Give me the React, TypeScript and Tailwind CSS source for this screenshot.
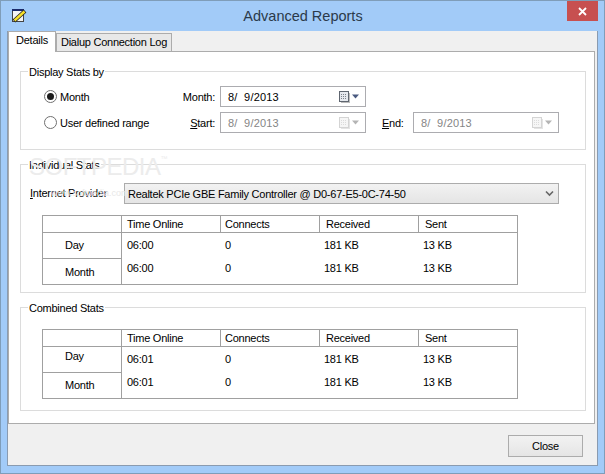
import type { ReactNode } from "react";

// Calendar glyph of the date picker, greyed when the control is disabled.
function DateIcon({ disabled }: { disabled?: boolean }) {
  const edge = disabled ? "#d4d4d4" : "#5f6670";
  const cell = disabled ? "#dcdcdc" : "#7d838c";
  const arrow = disabled ? "#b4b4b4" : "#4a5a80";
  return (
    <svg width="22" height="14" viewBox="0 0 22 14" className="shrink-0">
      <rect x="1.5" y="1.5" width="9" height="10" fill={disabled ? "#f6f6f6" : "#e6e9ee"} stroke={edge} />
      <path d="M3 12.5h9M11.5 3v9" stroke={disabled ? "#e4e4e4" : "#bcbcbc"} />
      {[4, 6, 8].map((y) =>
        [3, 5, 7].map((x) => <rect key={`${x}-${y}`} x={x} y={y} width="1" height="1" fill={cell} />),
      )}
      <path d="M14 4.5h7l-3.5 4z" fill={arrow} />
    </svg>
  );
}

function DateField({ disabled }: { disabled?: boolean }) {
  return (
    <div
      className={`flex h-[21px] w-[146px] items-center justify-between border border-[#acacb0] bg-white pl-[7px] pr-[5px] ${
        disabled ? "text-[#858585]" : "text-black"
      }`}
    >
      <span className="whitespace-pre pt-px tracking-[0.2px]">8/  9/2013</span>
      <DateIcon disabled={disabled} />
    </div>
  );
}

function Radio({ checked, label }: { checked?: boolean; label: string }) {
  return (
    <div className="flex w-[138px] items-center gap-[3px]">
      <span className="flex h-[13px] w-[13px] items-center justify-center rounded-full border border-[#707070] bg-white">
        {checked && <span className="h-[7px] w-[7px] rounded-full bg-[#1c1c1c]" />}
      </span>
      <span className="pt-px">{label}</span>
    </div>
  );
}

function Group({ title, className, children }: { title: string; className: string; children: ReactNode }) {
  return (
    <div className={`border border-[#dcdcdc] ${className}`}>
      <div className="-mt-[7px] ml-[7px] w-fit bg-white px-px leading-[15px]">{title}</div>
      {children}
    </div>
  );
}

type Row = { time: string };

function StatsTable({ rows, dayClass, monthClass }: { rows: Row[]; dayClass: string; monthClass: string }) {
  return (
    <div className="ml-[21px] w-[476px] border border-[#a0a0a0]">
      <div className="flex h-[17px] items-center border-b border-[#a0a0a0]">
        <div className="h-full w-[79px] border-r border-[#a0a0a0]" />
        <div className="flex h-full w-[99px] items-center border-r border-[#a0a0a0] pl-[5px] pt-px">Time Online</div>
        <div className="flex h-full w-[99px] items-center border-r border-[#a0a0a0] pl-[4px] pt-px">Connects</div>
        <div className="flex h-full w-[99px] items-center border-r border-[#a0a0a0] pl-[6px] pt-px">Received</div>
        <div className="flex h-full flex-1 items-center pl-[6px] pt-px">Sent</div>
      </div>
      <div className="flex h-[51px]">
        <div className="flex w-[79px] flex-col border-r border-[#a0a0a0] pl-[22px]">
          <div className={`-ml-[22px] flex h-[26px] items-center border-b border-[#a0a0a0] pl-[22px] ${dayClass}`}>Day</div>
          <div className={`flex flex-1 items-center ${monthClass}`}>Month</div>
        </div>
        <div className="flex flex-1 flex-col gap-[7px] pt-[4px]">
          {rows.map((r, i) => (
            <div key={i} className="flex h-[16px] items-center">
              <div className="w-[99px] pl-[5px]">{r.time}</div>
              <div className="w-[99px] pl-[4px]">0</div>
              <div className="w-[99px] pl-[4px]">181 KB</div>
              <div className="pl-[4px]">13 KB</div>
            </div>
          ))}
        </div>
      </div>
    </div>
  );
}

export default function App() {
  return (
    <div className="relative flex h-[474px] w-[605px] flex-col overflow-hidden border border-[#7f9db9] bg-[#a2cbf8] font-['Liberation_Sans',sans-serif] text-[11px] leading-[15px] tracking-[-0.25px] text-black">
      <div className="flex h-[30px] shrink-0 items-start">
        <svg width="16" height="16" viewBox="0 0 16 16" className="ml-[10px] mt-[7px] shrink-0">
          <rect x="1.5" y="2.5" width="11" height="11" fill="#f4f4f4" stroke="#444" />
          <rect x="1" y="1" width="12" height="2" fill="#1b2a6b" />
          <path d="M3 13 L14 3" stroke="#222" strokeWidth="4" />
          <path d="M3.5 12.5 L13.5 3.5" stroke="#f7e02a" strokeWidth="2.4" />
        </svg>
        <div className="flex-1 pl-[12px] pt-[6px] text-center text-[14.5px] leading-[18px] tracking-normal text-[#2b3a4a]">Advanced Reports</div>
        <div className="mr-[6px] flex h-[20px] w-[31px] items-center justify-center bg-[#c75050]">
          <svg width="9" height="9" viewBox="0 0 9 9">
            <path d="M1 1l7 7M8 1l-7 7" stroke="#fff" strokeWidth="1.8" />
          </svg>
        </div>
      </div>

      <div className="mb-[7px] ml-[6px] mr-[6px] flex flex-1 flex-col border-x border-b border-[#8a9bb0] bg-[#f0f0f0]">
        <div className="flex h-[20px] shrink-0 items-end pl-0">
          <div className="z-10 -mb-px flex h-[21px] w-[48px] items-center justify-center border-x border-t border-[#acacac] bg-white pb-[3px]">
            Details
          </div>
          <div className="flex h-[18px] w-[116px] items-center justify-center whitespace-nowrap border border-b-0 border-[#acacac] bg-[#e8e8e8]">
            Dialup Connection Log
          </div>
        </div>

        <div className="mr-[2px] flex h-[373px] shrink-0 flex-col border border-[#acacac] bg-white pl-[11px] pr-[8px] pt-[19px]">
          <Group title="Display Stats by" className="h-[79px]">
            <div className="flex flex-col gap-[5px] pt-[6px]">
              <div className="flex h-[21px] items-center pl-[23px]">
                <Radio checked label="Month" />
                <span className="w-[33px] pt-px text-right">Month:</span>
                <span className="w-[5px]" />
                <DateField />
              </div>
              <div className="flex h-[21px] items-center pl-[23px]">
                <Radio label="User defined range" />
                <span className="w-[33px] pt-px text-right">
                  <u>S</u>tart:
                </span>
                <span className="w-[5px]" />
                <DateField disabled />
                <span className="ml-[16px] w-[31px] pt-px">
                  <u>E</u>nd:
                </span>
                <DateField disabled />
              </div>
            </div>
          </Group>

          <Group title="Individual Stats" className="mt-[14px] h-[129px]">
            <div className="mt-[10px] flex h-[21px] items-center pl-[9px]">
              <span className="w-[94px]">
                <u>I</u>nternet Provider
              </span>
              <div className="flex h-[21px] w-[435px] items-center justify-between border border-[#acacac] bg-gradient-to-b from-[#f2f2f2] to-[#e5e5e5] pl-[3px] pr-[3px]">
                <span className="pt-px">Realtek PCIe GBE Family Controller @ D0-67-E5-0C-74-50</span>
                <svg width="9" height="7" viewBox="0 0 9 7" className="mr-[1px]">
                  <path d="M1 1.5l3.5 3.5 3.5-3.5" fill="none" stroke="#666" strokeWidth="1.6" />
                </svg>
              </div>
            </div>
            <div className="mt-[11px]">
              <StatsTable rows={[{ time: "06:00" }, { time: "06:00" }]} dayClass="" monthClass="pt-[2px]" />
            </div>
          </Group>

          <Group title="Combined Stats" className="mt-[14px] h-[104px]">
            <div className="mt-[13px]">
              <StatsTable rows={[{ time: "06:01" }, { time: "06:01" }]} dayClass="pb-[6px]" monthClass="" />
            </div>
          </Group>
        </div>

        <div className="flex flex-1 items-start justify-end pr-[14px] pt-[11px]">
          <div className="flex h-[22px] w-[75px] items-center justify-center border border-[#acacac] bg-gradient-to-b from-[#f2f2f2] to-[#e5e5e5]">
            Close
          </div>
        </div>
      </div>

      {/* faint site watermark lying over the dialog */}
      <div className="pointer-events-none absolute left-[28px] top-[152px] text-[24px] leading-[28px] tracking-[-0.5px] text-[#ececec]">
        SOFTPEDIA<span className="align-top text-[7px] leading-[12px]">™</span>
      </div>
      <div className="pointer-events-none absolute left-[50px] top-[185px] text-[9px] tracking-normal text-[#e8e8e8]">www.softpedia.com</div>
    </div>
  );
}
